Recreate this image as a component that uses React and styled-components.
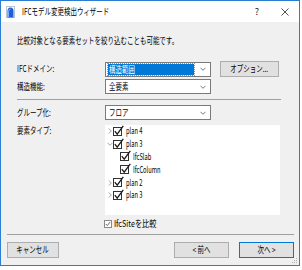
import React from 'react'
import styled, { createGlobalStyle } from 'styled-components'

const GlobalStyle = createGlobalStyle`
  html, body { margin: 0; padding: 0; background: #fff; }
  body {
    font-family: "Noto Sans CJK JP", "Noto Sans", sans-serif;
    font-size: 9px;
    line-height: 12px;
    color: #000;
  }
  #root { width: 302px; height: 270px; overflow: hidden; }
`

const Window = styled.div`
  position: relative;
  width: 300px;
  height: 266px;
  box-sizing: border-box;
  border: 1px solid #2a7fd3;
  display: flex;
  flex-direction: column;
  background: #f0f0f0;
`

const TitleBar = styled.div`
  height: 21px;
  flex: none;
  background: #fff;
  display: flex;
  align-items: center;
  padding-left: 5px;
`

const TitleText = styled.div`
  margin-left: 7px;
  flex: 1;
`

const TitleButton = styled.div`
  width: 28px;
  height: 21px;
  display: flex;
  align-items: center;
  justify-content: center;
  color: #222;
`

const Txt = styled.span`
  display: inline-block;
  white-space: nowrap;
  transform: scaleX(${p => p.$sx || 0.72});
  transform-origin: ${p => (p.$center ? 'center' : 'left')} center;
`

const Content = styled.div`
  display: flex;
  flex-direction: column;
  padding: 13px 18px 0 16px;
`

const Row = styled.div`
  display: flex;
  align-items: ${p => (p.$top ? 'flex-start' : 'center')};
  min-height: 15px;
  margin-top: ${p => p.$mt || 0}px;
`

const Label = styled.div`
  width: 88px;
  flex: none;
`

const Select = styled.div`
  width: 106px;
  height: 15px;
  box-sizing: border-box;
  border: 1px solid #7a7a7a;
  background: #fff;
  display: flex;
  align-items: center;
  padding: 0 4px 0 2px;
`

const SelectValue = styled.div`
  flex: 1;
  height: 11px;
  line-height: 11px;
  box-sizing: border-box;
  padding-left: 1px;
  margin-right: 6px;
  background: ${p => (p.$active ? '#0078d7' : 'transparent')};
  color: ${p => (p.$active ? '#fff' : '#000')};
  outline: ${p => (p.$active ? '1px dotted #d9822b' : 'none')};
`

const Button = styled.div`
  width: ${p => p.$w}px;
  height: 16px;
  box-sizing: border-box;
  border: 1px solid ${p => (p.$default ? '#0078d7' : '#adadad')};
  background: #e1e1e1;
  display: flex;
  align-items: center;
  justify-content: center;
  margin-left: ${p => p.$ml || 0}px;
`

const Separator = styled.div`
  height: 1px;
  background: #a0a0a0;
  margin-top: ${p => p.$mt || 0}px;
`

const TreePanel = styled.div`
  width: 175px;
  height: 90px;
  background: #fff;
  display: flex;
  flex-direction: column;
`

const TreeRow = styled.div`
  height: 12.8px;
  display: flex;
  align-items: center;
  padding-left: ${p => 2 + p.$level * 7}px;
`

const Expander = styled.div`
  width: 6px;
  display: flex;
  align-items: center;
`

const TreeLabel = styled.div`
  margin-left: 2px;
`

const SiteRow = styled.div`
  display: flex;
  align-items: center;
  margin-top: 4px;
  padding-left: 87px;
  height: 10px;
`

const Footer = styled.div`
  margin-top: auto;
  padding: 0 5px 7px 6px;
  display: flex;
  flex-direction: column;
`

const ButtonRow = styled.div`
  display: flex;
  margin-top: 7px;
`

const Grip = styled.svg`
  position: absolute;
  right: 1px;
  bottom: 1px;
`

const AppIcon = () => (
  <svg width="9" height="12" viewBox="0 0 9 12">
    <rect x="0.5" y="0.5" width="8" height="11" fill="#fff" stroke="#b8c4d4" />
    <path d="M1.5 11.5 V5 Q1.5 1.5 4.5 1.5 Q7.5 1.5 7.5 5 V11.5 Z" fill="#1d5fd6" />
    <path d="M2.5 11 V6 Q2.5 3 4.5 3" stroke="#7fb0ff" fill="none" />
  </svg>
)

const Chevron = ({ dir = 'down', color = '#666' }) => (
  <svg width="6" height="6" viewBox="0 0 6 6">
    {dir === 'down'
      ? <path d="M0.5 1.8 L3 4.3 L5.5 1.8" stroke={color} fill="none" strokeWidth="0.9" />
      : <path d="M1.8 0.5 L4.3 3 L1.8 5.5" stroke={color} fill="none" strokeWidth="0.9" />}
  </svg>
)

const TreeCheck = () => (
  <svg width="11" height="11" viewBox="0 0 11 11" style={{ marginTop: -2 }}>
    <rect x="0.5" y="2.5" width="8" height="8" fill="#fff" stroke="#333" />
    <path d="M1.8 6.2 L4.2 9.2 L10.3 0.8" stroke="#1a1a1a" strokeWidth="1.3" fill="none" />
  </svg>
)

const SmallCheck = () => (
  <svg width="8" height="8" viewBox="0 0 8 8">
    <rect x="0.5" y="0.5" width="7" height="7" fill="#fff" stroke="#8a8a8a" />
    <path d="M1.8 4 L3.3 5.6 L6.2 2" stroke="#6a6a6a" strokeWidth="1" fill="none" />
  </svg>
)

const treeItems = [
  { label: 'plan 4', level: 0, expander: 'closed' },
  { label: 'plan 3', level: 0, expander: 'open' },
  { label: 'IfcSlab', level: 1 },
  { label: 'IfcColumn', level: 1 },
  { label: 'plan 2', level: 0, expander: 'closed' },
  { label: 'plan 3', level: 0, expander: 'closed' },
]

const App = () => (
  <>
    <GlobalStyle />
    <Window>
      <TitleBar>
        <AppIcon />
        <TitleText><Txt>IFCモデル変更検出ウィザード</Txt></TitleText>
        <TitleButton>?</TitleButton>
        <TitleButton>
          <svg width="8" height="8" viewBox="0 0 8 8">
            <path d="M0.5 0.5 L7.5 7.5 M7.5 0.5 L0.5 7.5" stroke="#222" strokeWidth="0.8" />
          </svg>
        </TitleButton>
      </TitleBar>

      <Content>
        <div><Txt>比較対象となる要素セットを絞り込むことも可能です。</Txt></div>

        <Row $mt={14}>
          <Label><Txt>IFCドメイン:</Txt></Label>
          <Select>
            <SelectValue $active><Txt>構造範囲</Txt></SelectValue>
            <Chevron />
          </Select>
          <Button $w={59} $ml={9}><Txt $center>オプション...</Txt></Button>
        </Row>

        <Row $mt={2}>
          <Label><Txt>構造機能:</Txt></Label>
          <Select>
            <SelectValue><Txt>全要素</Txt></SelectValue>
            <Chevron />
          </Select>
        </Row>

        <Separator $mt={5} />

        <Row $mt={5}>
          <Label><Txt>グループ化:</Txt></Label>
          <Select>
            <SelectValue><Txt>フロア</Txt></SelectValue>
            <Chevron />
          </Select>
        </Row>

        <Row $mt={5} $top>
          <Label><Txt>要素タイプ:</Txt></Label>
          <TreePanel>
            {treeItems.map((item, i) => (
              <TreeRow key={i} $level={item.level}>
                <Expander>
                  {item.expander && (
                    <Chevron dir={item.expander === 'open' ? 'down' : 'right'} color="#999" />
                  )}
                </Expander>
                <TreeCheck />
                <TreeLabel><Txt $sx={0.64}>{item.label}</Txt></TreeLabel>
              </TreeRow>
            ))}
          </TreePanel>
        </Row>

        <SiteRow>
          <SmallCheck />
          <TreeLabel><Txt $sx={0.8}>IfcSiteを比較</Txt></TreeLabel>
        </SiteRow>
      </Content>

      <Footer>
        <Separator />
        <ButtonRow>
          <Button $w={52}><Txt $center>キャンセル</Txt></Button>
          <Button $w={55} $ml={115}><Txt $center>&lt; 前へ</Txt></Button>
          <Button $w={55} $ml={10} $default><Txt $center>次へ &gt;</Txt></Button>
        </ButtonRow>
      </Footer>

      <Grip width="7" height="7" viewBox="0 0 7 7">
        <rect x="5" y="1" width="1" height="1" fill="#b0b0b0" />
        <rect x="3" y="3" width="1" height="1" fill="#b0b0b0" />
        <rect x="5" y="3" width="1" height="1" fill="#b0b0b0" />
        <rect x="1" y="5" width="1" height="1" fill="#b0b0b0" />
        <rect x="3" y="5" width="1" height="1" fill="#b0b0b0" />
        <rect x="5" y="5" width="1" height="1" fill="#b0b0b0" />
      </Grip>
    </Window>
  </>
)

export default App
